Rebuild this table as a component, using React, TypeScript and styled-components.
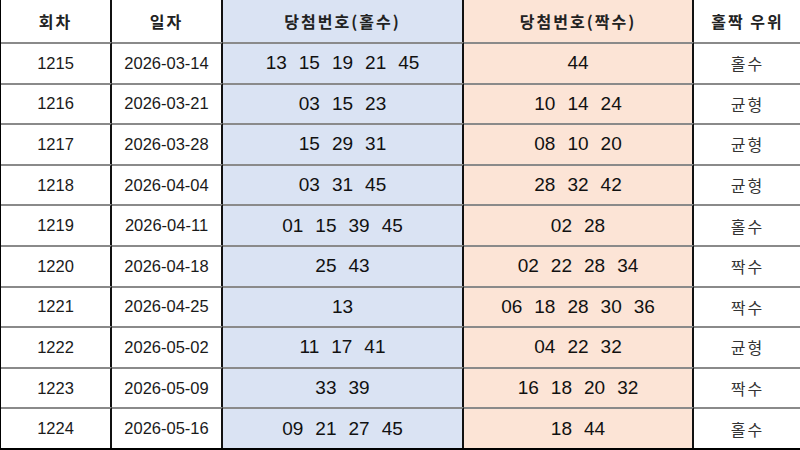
import React from "react";
import styled, { createGlobalStyle } from "styled-components";

const Global = createGlobalStyle`
  html, body { margin: 0; padding: 0; background: #ffffff; }
  * { box-sizing: border-box; }
`;

type Kind = "plain" | "odd" | "even";

const bg: Record<Kind, string> = {
  plain: "#ffffff",
  odd: "#dae3f3",
  even: "#fce4d6",
};

const Table = styled.div`
  width: 800px;
  height: 450px;
  display: grid;
  grid-template-columns: 111px 111px 241px 230px 107px;
  grid-template-rows: 42px repeat(10, 1fr);
  border-left: 1px solid #000;
  border-bottom: 2px solid #000;
  overflow: hidden;
`;

const Cell = styled.div<{ $kind: Kind; $last?: boolean; $head?: boolean }>`
  display: flex;
  align-items: center;
  justify-content: center;
  background: ${(p) => bg[p.$kind]};
  border-right: ${(p) => (p.$last ? "none" : "2px solid #111")};
  border-top: ${(p) => (p.$head ? "none" : "2px solid #8a8a8a")};
  color: #111;
`;

const HeadText = styled.span`
  font-family: "Noto Sans CJK KR", "Liberation Sans", sans-serif;
  font-weight: 700;
  font-size: 16px;
  letter-spacing: 2px;
  color: #222;
`;

const Plain = styled.span`
  font-family: "Liberation Sans", Arial, sans-serif;
  font-size: 16.5px;
  color: #1a1a1a;
`;

const Numbers = styled.div`
  display: flex;
  gap: 12px;
  font-family: "Liberation Sans", Arial, sans-serif;
  font-size: 19px;
  color: #111;
`;

const Verdict = styled.span`
  font-family: "Noto Sans CJK KR", sans-serif;
  font-size: 16px;
  letter-spacing: 2px;
  font-weight: 400;
  color: #333;
`;

const rows: [string, string, string[], string[], string][] = [
  ["1215", "2026-03-14", ["13", "15", "19", "21", "45"], ["44"], "홀수"],
  ["1216", "2026-03-21", ["03", "15", "23"], ["10", "14", "24"], "균형"],
  ["1217", "2026-03-28", ["15", "29", "31"], ["08", "10", "20"], "균형"],
  ["1218", "2026-04-04", ["03", "31", "45"], ["28", "32", "42"], "균형"],
  ["1219", "2026-04-11", ["01", "15", "39", "45"], ["02", "28"], "홀수"],
  ["1220", "2026-04-18", ["25", "43"], ["02", "22", "28", "34"], "짝수"],
  ["1221", "2026-04-25", ["13"], ["06", "18", "28", "30", "36"], "짝수"],
  ["1222", "2026-05-02", ["11", "17", "41"], ["04", "22", "32"], "균형"],
  ["1223", "2026-05-09", ["33", "39"], ["16", "18", "20", "32"], "짝수"],
  ["1224", "2026-05-16", ["09", "21", "27", "45"], ["18", "44"], "홀수"],
];

const NumList = ({ items }: { items: string[] }) => (
  <Numbers>
    {items.map((n, i) => (
      <span key={i}>{n}</span>
    ))}
  </Numbers>
);

export default function App() {
  return (
    <>
      <Global />
      <Table>
        <Cell $kind="plain" $head>
          <HeadText>회차</HeadText>
        </Cell>
        <Cell $kind="plain" $head>
          <HeadText>일자</HeadText>
        </Cell>
        <Cell $kind="odd" $head>
          <HeadText>당첨번호(홀수)</HeadText>
        </Cell>
        <Cell $kind="even" $head>
          <HeadText>당첨번호(짝수)</HeadText>
        </Cell>
        <Cell $kind="plain" $head $last>
          <HeadText>홀짝 우위</HeadText>
        </Cell>
        {rows.map(([no, date, odd, even, verdict]) => (
          <React.Fragment key={no}>
            <Cell $kind="plain">
              <Plain>{no}</Plain>
            </Cell>
            <Cell $kind="plain">
              <Plain>{date}</Plain>
            </Cell>
            <Cell $kind="odd">
              <NumList items={odd} />
            </Cell>
            <Cell $kind="even">
              <NumList items={even} />
            </Cell>
            <Cell $kind="plain" $last>
              <Verdict>{verdict}</Verdict>
            </Cell>
          </React.Fragment>
        ))}
      </Table>
    </>
  );
}
